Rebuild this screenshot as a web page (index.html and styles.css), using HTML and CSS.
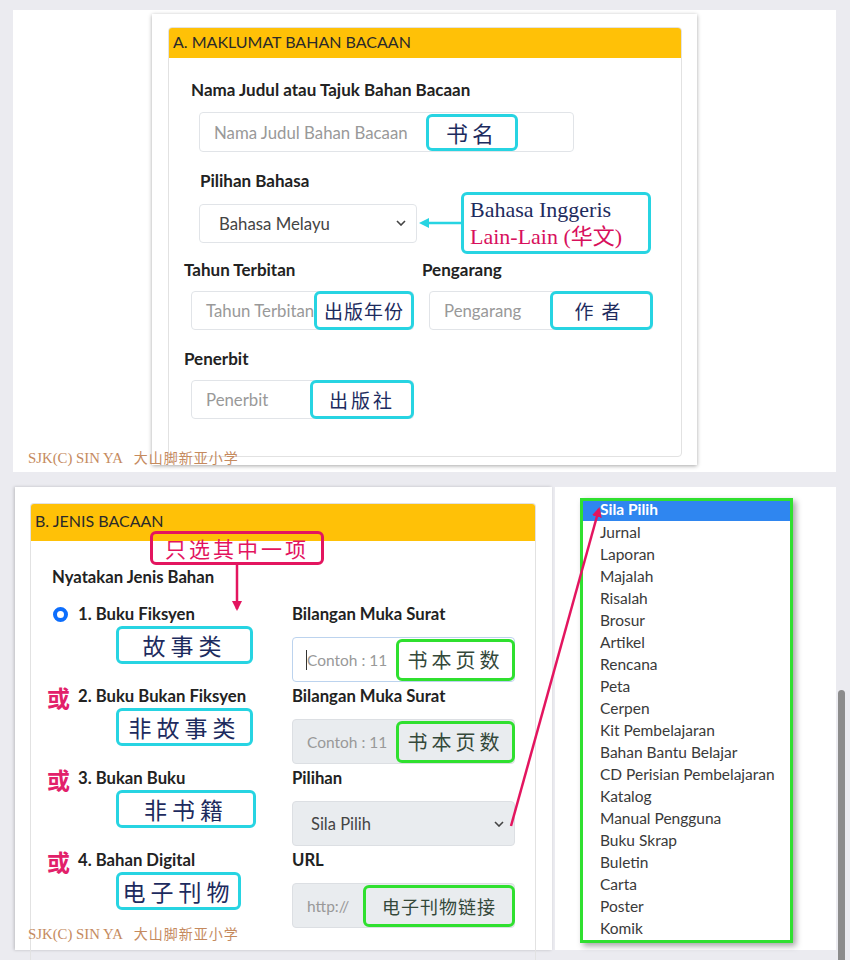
FILE: index.html
```html
<!DOCTYPE html>
<html lang="ms">
<head>
    <meta charset="UTF-8">
    <title>Borang Bahan Bacaan</title>
    <link rel="stylesheet" href="styles.css">
</head>
<body>
    <!-- Bahagian A -->
    <div class="shot shot-top">
        <div class="sheet">
            <section class="panel panel-a">
                <div class="panel-head">A. MAKLUMAT BAHAN BACAAN</div>
                <div class="panel-body">
                    <div class="label lbl-title">Nama Judul atau Tajuk Bahan Bacaan</div>
                    <div class="input in-title">
                        <span class="hint hint-title">Nama Judul Bahan Bacaan</span>
                        <span class="note note-cyan note-title">书名</span>
                    </div>

                    <div class="label lbl-lang">Pilihan Bahasa</div>
                    <div class="lang-row">
                        <div class="input select in-lang">
                            <span class="value">Bahasa Melayu</span>
                            <svg class="chev" width="10" height="6" viewBox="0 0 10 6"><polyline points="1,1 5,5 9,1" fill="none" stroke="#444" stroke-width="1.6"/></svg>
                        </div>
                        <svg class="lang-arrow" width="42" height="12" viewBox="0 0 42 12">
                            <line x1="8" y1="6" x2="42" y2="6" stroke="#27d4e2" stroke-width="2.5"/>
                            <polygon points="0,6 10,1 10,11" fill="#27d4e2"/>
                        </svg>
                        <div class="note note-cyan note-lang">
                            <span class="lang-en">Bahasa Inggeris</span>
                            <span class="lang-other">Lain-Lain (华文)</span>
                        </div>
                    </div>

                    <div class="pair-row">
                        <div class="pair">
                            <div class="label">Tahun Terbitan</div>
                            <div class="input in-half">
                                <span class="hint">Tahun Terbitan</span>
                                <span class="note note-cyan note-year">出版年份</span>
                            </div>
                        </div>
                        <div class="pair pair-right">
                            <div class="label">Pengarang</div>
                            <div class="input in-half in-author">
                                <span class="hint">Pengarang</span>
                                <span class="note note-cyan note-author">作者</span>
                            </div>
                        </div>
                    </div>

                    <div class="pair pair-pub">
                        <div class="label">Penerbit</div>
                        <div class="input in-half">
                            <span class="hint">Penerbit</span>
                            <span class="note note-cyan note-pub">出版社</span>
                        </div>
                    </div>
                </div>
            </section>
        </div>
        <div class="stamp">SJK(C) SIN YA<span class="stamp-zh">大山脚新亚小学</span></div>
    </div>

    <!-- Bahagian B dan senarai pilihan -->
    <div class="shot-row">
        <div class="shot shot-b">
            <section class="panel panel-b">
                <div class="panel-head">B. JENIS BACAAN</div>
                <div class="panel-body">
                    <div class="label lbl-kind">Nyatakan Jenis Bahan</div>
                    <div class="kind-grid">
                        <div class="kind">
                            <div class="kind-label"><span class="mark"><span class="radio"></span></span>1. Buku Fiksyen</div>
                            <div class="note note-cyan note-kind" style="width:137px">故事类</div>
                        </div>
                        <div class="detail">
                            <div class="label">Bilangan Muka Surat</div>
                            <div class="input in-b in-focus">
                                <span class="caret"></span><span class="hint">Contoh : 11</span>
                                <span class="note note-green note-pages">书本页数</span>
                            </div>
                        </div>

                        <div class="kind">
                            <div class="kind-label"><span class="mark or">或</span>2. Buku Bukan Fiksyen</div>
                            <div class="note note-cyan note-kind" style="width:137px">非故事类</div>
                        </div>
                        <div class="detail">
                            <div class="label">Bilangan Muka Surat</div>
                            <div class="input in-b in-off">
                                <span class="hint">Contoh : 11</span>
                                <span class="note note-green note-pages">书本页数</span>
                            </div>
                        </div>

                        <div class="kind">
                            <div class="kind-label"><span class="mark or">或</span>3. Bukan Buku</div>
                            <div class="note note-cyan note-kind" style="width:140px">非书籍</div>
                        </div>
                        <div class="detail">
                            <div class="label">Pilihan</div>
                            <div class="input in-b in-off select">
                                <span class="value">Sila Pilih</span>
                                <svg class="chev" width="10" height="6" viewBox="0 0 10 6"><polyline points="1,1 5,5 9,1" fill="none" stroke="#444" stroke-width="1.6"/></svg>
                            </div>
                        </div>

                        <div class="kind">
                            <div class="kind-label"><span class="mark or">或</span>4. Bahan Digital</div>
                            <div class="note note-cyan note-kind" style="width:125px">电子刊物</div>
                        </div>
                        <div class="detail">
                            <div class="label">URL</div>
                            <div class="input in-b in-off">
                                <span class="hint">http://</span>
                                <span class="note note-green note-url">电子刊物链接</span>
                            </div>
                        </div>
                    </div>
                </div>
            </section>
        </div>

        <div class="shot shot-list">
            <ul class="options">
                <li class="active">Sila Pilih</li>
                <li>Jurnal</li>
                <li>Laporan</li>
                <li>Majalah</li>
                <li>Risalah</li>
                <li>Brosur</li>
                <li>Artikel</li>
                <li>Rencana</li>
                <li>Peta</li>
                <li>Cerpen</li>
                <li>Kit Pembelajaran</li>
                <li>Bahan Bantu Belajar</li>
                <li>CD Perisian Pembelajaran</li>
                <li>Katalog</li>
                <li>Manual Pengguna</li>
                <li>Buku Skrap</li>
                <li>Buletin</li>
                <li>Carta</li>
                <li>Poster</li>
                <li>Komik</li>
            </ul>
        </div>

        <div class="track"><div class="thumb"></div></div>

        <!-- anotasi di atas tangkapan skrin -->
        <div class="note note-pink note-pick">只选其中一项</div>
        <svg class="pointers" width="850" height="473" viewBox="0 0 850 473">
            <defs>
                <marker id="tip" markerWidth="10" markerHeight="10" refX="8" refY="5" orient="auto" markerUnits="userSpaceOnUse">
                    <polygon points="0,0 10,5 0,10" fill="#e3155f"/>
                </marker>
            </defs>
            <line x1="237" y1="78" x2="237" y2="122" stroke="#e3155f" stroke-width="2.5" marker-end="url(#tip)"/>
            <line x1="511" y1="339" x2="599" y2="22" stroke="#e3155f" stroke-width="2.5" marker-end="url(#tip)"/>
        </svg>
        <div class="stamp stamp-b">SJK(C) SIN YA<span class="stamp-zh">大山脚新亚小学</span></div>
    </div>
</body>
</html>
```

FILE: styles.css
```css
* {
    box-sizing: border-box;
}

body {
    margin: 0;
    width: 850px;
    height: 960px;
    overflow: hidden;
    background: #ebebf0;
    font-family: Lato, "Noto Sans CJK SC", sans-serif;
    color: #212529;
}

.shot {
    background: #fff;
}

/* ---------- Bahagian A ---------- */

.shot-top {
    position: relative;
    display: flex;
    margin: 10px 0 0 13px;
    width: 823px;
    height: 462px;
}

.sheet {
    margin: 4px 0 0 139px;
    width: 545px;
    height: 451px;
    padding: 13px 15px 0 16px;
    background: #fff;
    box-shadow: 0 1px 4px rgba(0, 0, 0, 0.35);
}

.panel {
    border: 1px solid #e2e2e2;
    border-radius: 4px;
    overflow: hidden;
}

.panel-a {
    height: 430px;
}

.panel-head {
    background: #ffc107;
    font-size: 16px;
    color: #2a2a2a;
    padding-left: 4px;
}

.panel-a .panel-head {
    height: 30px;
    line-height: 27px;
}

.panel-a .panel-body {
    padding-top: 22px;
}

.label {
    font-size: 17px;
    font-weight: 700;
    line-height: 20px;
    color: #222;
}

.input {
    display: flex;
    align-items: center;
    border: 1px solid #e1e4e8;
    border-radius: 4px;
    background: #fff;
    font-size: 16.8px;
    color: #999;
}

.hint {
    flex: none;
}

.lbl-title {
    margin-left: 22px;
}

.in-title {
    margin: 12px 0 0 30px;
    width: 375px;
    height: 40px;
    padding-left: 14px;
}

.hint-title {
    width: 212px;
}

.lbl-lang {
    margin: 19px 0 0 31px;
}

.lang-row {
    display: flex;
    align-items: center;
    margin: 1px 0 0 30px;
}

.select .value {
    color: #444;
}

.select .chev {
    margin-left: auto;
}

.in-lang {
    width: 218px;
    height: 39px;
    padding: 0 10px 0 19px;
}

.lang-arrow {
    margin: 0 0 0 2px;
}

.pair-row {
    display: flex;
    margin-top: 6px;
}

.pair {
    margin-left: 15px;
}

.pair .input {
    margin: 11px 0 0 7px;
}

.pair-right {
    margin-left: 8px;
}

.in-half {
    width: 223px;
    height: 39px;
    padding-left: 14px;
}

.in-author {
    width: 224px;
}

.pair-pub {
    margin-top: 19px;
}

/* ---------- anotasi ---------- */

.note {
    display: flex;
    align-items: center;
    justify-content: center;
    border: 3px solid;
    border-radius: 6px;
    background: #fff;
    font-family: "Noto Sans CJK SC", sans-serif;
    color: #1d2b5e;
}

.note-cyan {
    border-color: #27d4e2;
}

.note-green {
    border-color: #2fe02f;
    color: #34483a;
    background: transparent;
}

.note-pink {
    border-color: #e3155f;
    color: #e3155f;
}

.note-title {
    width: 92px;
    height: 37px;
    font-size: 22px;
    letter-spacing: 4px;
}

.note-year,
.note-author,
.note-pub {
    margin: -1px -1px -1px auto;
    height: 39px;
    font-size: 19px;
    letter-spacing: 3px;
}

.note-year {
    width: 102px;
    letter-spacing: 1px;
}

.note-author {
    width: 103px;
    letter-spacing: 8px;
}

.note-pub {
    width: 104px;
}

.note-lang {
    flex-direction: column;
    align-items: flex-start;
    width: 190px;
    height: 62px;
    padding-left: 6px;
    font-family: "Liberation Serif", "Noto Sans CJK SC", serif;
    font-size: 22px;
    line-height: 27px;
}

.lang-other {
    color: #d8105c;
}

.stamp {
    position: absolute;
    left: 15px;
    top: 437px;
    font-family: "Liberation Serif", serif;
    font-size: 14.8px;
    color: #c58a5e;
    white-space: nowrap;
}

.stamp-b {
    left: 28px;
    top: 436px;
}

.stamp-zh {
    margin-left: 11px;
    font-family: "Noto Sans CJK SC", serif;
    font-size: 14px;
    letter-spacing: 1px;
}

/* ---------- Bahagian B ---------- */

.shot-row {
    position: relative;
    display: flex;
    margin-top: 15px;
    height: 463px;
}

.shot-b {
    margin-left: 15px;
    width: 537px;
    padding: 16px 0 0 15px;
    box-shadow: -1px 0 3px rgba(0, 0, 0, 0.2);
}

.panel-b {
    width: 506px;
    height: 460px;
    border-bottom: 0;
}

.panel-b .panel-head {
    height: 37px;
    line-height: 33px;
}

.panel-b .label {
    font-size: 16.7px;
}

.lbl-kind {
    margin: 26px 0 0 21px;
}

.kind-grid {
    display: grid;
    grid-template-columns: 245px 223px;
    row-gap: 4px;
    margin: 17px 0 0 16px;
}

.kind-label {
    display: flex;
    align-items: center;
    height: 20px;
    font-size: 16.7px;
    font-weight: 700;
    color: #222;
}

.mark {
    display: flex;
    align-items: center;
    width: 31px;
    flex: none;
}

.radio {
    margin-left: 6px;
    width: 15px;
    height: 15px;
    border: 4px solid #0d6efd;
    border-radius: 50%;
    background: #fff;
}

.or {
    font-family: "Noto Sans CJK SC", sans-serif;
    font-weight: 700;
    font-size: 23px;
    color: #e2206a;
    margin-top: 2px;
}

.note-kind {
    margin: 2px 0 0 69px;
    height: 38px;
    font-size: 23px;
    letter-spacing: 5px;
}

.detail .input {
    margin-top: 13px;
}

.in-b {
    width: 223px;
    height: 45px;
    padding-left: 14px;
    font-size: 15.5px;
}

.in-focus {
    border-color: #bcd3ee;
    padding-left: 13px;
}

.caret {
    width: 1px;
    height: 20px;
    background: #333;
}

.in-off {
    background: #e9ecef;
    border-color: #dcdfe3;
}

.in-b.select {
    padding: 0 10px 0 18px;
    font-size: 16.5px;
}

.note-pages {
    margin: 0 -1px 0 auto;
    width: 119px;
    height: 42px;
    font-size: 20px;
    letter-spacing: 4px;
}

.note-url {
    margin: 0 -1px 0 auto;
    width: 152px;
    height: 42px;
    font-size: 18px;
    letter-spacing: 1px;
}

.note-pick {
    position: absolute;
    left: 150px;
    top: 44px;
    width: 174px;
    height: 34px;
    font-size: 21px;
    letter-spacing: 3px;
    background: transparent;
}

.pointers {
    position: absolute;
    left: 0;
    top: 0;
    pointer-events: none;
}

/* ---------- senarai pilihan ---------- */

.shot-list {
    margin-left: 3px;
    width: 281px;
    padding: 11px 0 0 25px;
}

.options {
    list-style: none;
    margin: 0;
    padding: 0;
    width: 213px;
    height: 445px;
    border: 3px solid #30e030;
    background: #fff;
    box-shadow: 3px 3px 6px rgba(0, 0, 0, 0.35);
    font-size: 15.5px;
    color: #3a3a3a;
}

.options li {
    height: 22px;
    line-height: 22px;
    padding-left: 17px;
}

.options li.active {
    background: #2f86f0;
    color: #fff;
    font-weight: 700;
    height: 20px;
    line-height: 17px;
}

.track {
    width: 14px;
}

.thumb {
    margin: 203px 0 0 2px;
    width: 7px;
    height: 280px;
    border-radius: 4px;
    background: #8c8c8c;
}
```
